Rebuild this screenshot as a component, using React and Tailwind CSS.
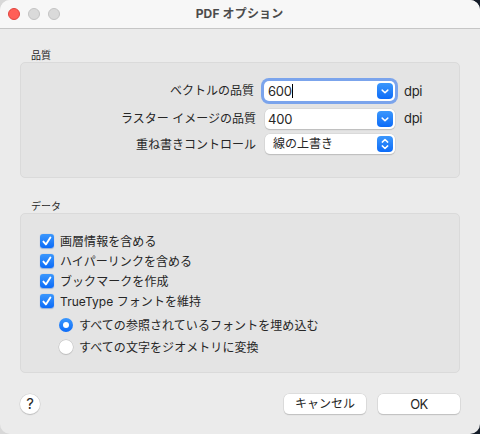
import { useState } from "react";
import clsx from "clsx";

const DATA_OPTIONS = [
  { id: "layers", label: "画層情報を含める" },
  { id: "links", label: "ハイパーリンクを含める" },
  { id: "bookmarks", label: "ブックマークを作成" },
  { id: "fonts", label: "TrueType フォントを維持" },
];

const FONT_MODES = [
  { id: "embed", label: "すべての参照されているフォントを埋め込む" },
  { id: "geometry", label: "すべての文字をジオメトリに変換" },
];

function Chevron() {
  return (
    <span className="flex size-4 shrink-0 items-center justify-center rounded bg-linear-to-b from-[#3b97fc] to-[#0b6bf8]">
      <svg width="16" height="16" viewBox="0 0 16 16" fill="none" stroke="#fff" strokeWidth="1.5" strokeLinecap="round" strokeLinejoin="round">
        <path d="M5.2 7.1 8 9.8l2.8-2.7" />
      </svg>
    </span>
  );
}

function UpDown() {
  return (
    <span className="flex size-4 shrink-0 items-center justify-center rounded bg-linear-to-b from-[#3b97fc] to-[#0b6bf8]">
      <svg width="16" height="16" viewBox="0 0 16 16" fill="none" stroke="#fff" strokeWidth="1.5" strokeLinecap="round" strokeLinejoin="round">
        <path d="M5.3 6.1 8 3.5l2.7 2.6M5.3 9.9 8 12.5l2.7-2.6" />
      </svg>
    </span>
  );
}

function Checkbox({ label, checked, onClick }) {
  return (
    <div className="flex h-5 items-center gap-1.5" onClick={onClick}>
      <span className={clsx("size-3.5 shrink-0 rounded-[3px] shadow-[0_0.5px_1px_rgba(0,80,200,0.35)]", checked ? "bg-linear-to-b from-[#3b97fc] to-[#0b6bf8]" : "bg-white")}>
        {checked && (
          <svg width="14" height="14" viewBox="0 0 14 14" fill="none" stroke="#fff" strokeWidth="1.9" strokeLinecap="round" strokeLinejoin="round">
            <path d="M3.4 7.6 5.9 10.4 10.4 3.6" />
          </svg>
        )}
      </span>
      <span className="pt-px tracking-[0.06px]">{label}</span>
    </div>
  );
}

function Radio({ label, checked, onClick }) {
  return (
    <div className="flex h-[22px] items-center gap-1.5" onClick={onClick}>
      <span className={clsx("flex size-3.5 shrink-0 items-center justify-center rounded-full", checked ? "bg-linear-to-b from-[#3b97fc] to-[#0b6bf8]" : "bg-white shadow-[0_0_0_0.5px_#bdbdbd,0_1px_1px_rgba(0,0,0,0.15)]")}>
        {checked && <span className="size-1.5 rounded-full bg-white" />}
      </span>
      <span className="pt-px tracking-[0.06px]">{label}</span>
    </div>
  );
}

export default function App() {
  const [checked, setChecked] = useState(["layers", "links", "bookmarks", "fonts"]);
  const [fontMode, setFontMode] = useState("embed");

  const toggle = (id) =>
    setChecked((prev) => (prev.includes(id) ? prev.filter((c) => c !== id) : [...prev, id]));

  return (
    <div className="h-[434px] w-[480px] overflow-hidden bg-linear-to-r from-[#d8d8d8] from-50% to-[#141c28] to-50% font-['Inter','Noto_Sans_CJK_JP',sans-serif] text-xs leading-4 text-[#262626] select-none">
      <div className="flex h-full flex-col overflow-hidden rounded-[10px] bg-[#ebebeb]">
        <header className="grid h-[29px] shrink-0 grid-cols-[1fr_auto_1fr] items-center border-b border-[#c6c6c6] bg-[#f7f7f7] pl-2">
          <div className="flex gap-2">
            <span className="size-3 rounded-full border border-[#e0443e] bg-[#ff5f57]" />
            <span className="size-3 rounded-full border border-[#c3c3c3] bg-[#dadada]" />
            <span className="size-3 rounded-full border border-[#c3c3c3] bg-[#dadada]" />
          </div>
          <h1 className="pr-[9px] font-bold tracking-[0.15px] text-[#4b4b4b]">PDF オプション</h1>
        </header>

        <main className="flex grow flex-col px-5 pt-[19px]">
          {/* 品質 */}
          <h2 className="h-3.5 pl-[11px] text-[10px] leading-[14px]">品質</h2>
          <section className="h-[116px] shrink-0 rounded-[5px] border border-[#dadada] bg-[#e4e4e4] pt-[15px]">
            <div className="flex h-[26px] items-center">
              <span className="w-[234px] pr-px text-right">ベクトルの品質</span>
              <div className="ml-[9px] flex h-5 w-[131px] items-center justify-between rounded-[5px] bg-white pr-0.5 pl-[3px] ring-3 ring-[#7ba4ec]">
                <span className="flex items-center pl-px text-[13px] tracking-[-0.2px]">
                  600
                  <span className="h-3.5 w-px bg-black" />
                </span>
                <Chevron />
              </div>
              <span className="ml-[9px] text-[13px] tracking-[-0.3px]">dpi</span>
            </div>
            <div className="mt-0.5 flex h-[26px] items-center">
              <span className="w-[236px] pr-px pb-px text-right">ラスター イメージの品質</span>
              <div className="ml-2 flex h-5 w-[130px] items-center justify-between rounded-[5px] bg-white pr-0.5 pl-[3px] shadow-[0_0_0_0.5px_#cfcfcf,0_1px_1px_rgba(0,0,0,0.25)]">
                <span className="text-[13px] tracking-[-0.2px]">400</span>
                <Chevron />
              </div>
              <span className="ml-[9px] pb-0.5 text-[13px] tracking-[-0.3px]">dpi</span>
            </div>
            <div className="flex h-6 items-center">
              <span className="w-[236px] pt-0.5 pr-px text-right">重ね書きコントロール</span>
              <div className="ml-2 flex h-5 w-[130px] items-center justify-between rounded-[5px] bg-white pr-0.5 pl-2 shadow-[0_0_0_0.5px_#cfcfcf,0_1px_1px_rgba(0,0,0,0.25)]">
                <span>線の上書き</span>
                <UpDown />
              </div>
            </div>
          </section>

          {/* データ */}
          <h2 className="mt-[21px] h-3.5 pl-[11px] text-[10px] leading-[14px]">データ</h2>
          <section className="h-40 shrink-0 rounded-[5px] border border-[#dadada] bg-[#e4e4e4] pt-[17px] pl-[19px]">
            {DATA_OPTIONS.map((o) => (
              <Checkbox key={o.id} label={o.label} checked={checked.includes(o.id)} onClick={() => toggle(o.id)} />
            ))}
            <div className="mt-[3px] pl-[19px]">
              {FONT_MODES.map((m) => (
                <Radio key={m.id} label={m.label} checked={fontMode === m.id} onClick={() => setFontMode(m.id)} />
              ))}
            </div>
          </section>

          <footer className="mt-[21px] flex h-5 items-center">
            <button className="size-5 rounded-full bg-white text-[15px] leading-5 shadow-[0_0_0_0.5px_#cfcfcf,0_1px_1px_rgba(0,0,0,0.25)]">?</button>
            <button className="ml-auto h-5 w-[82px] rounded-[5px] bg-white shadow-[0_0_0_0.5px_#cfcfcf,0_1px_1px_rgba(0,0,0,0.25)]">キャンセル</button>
            <button className="ml-3 h-5 w-[82px] rounded-[5px] bg-white pb-px text-[13px] tracking-[-0.5px] shadow-[0_0_0_0.5px_#cfcfcf,0_1px_1px_rgba(0,0,0,0.25)]">OK</button>
          </footer>
        </main>
      </div>
    </div>
  );
}
